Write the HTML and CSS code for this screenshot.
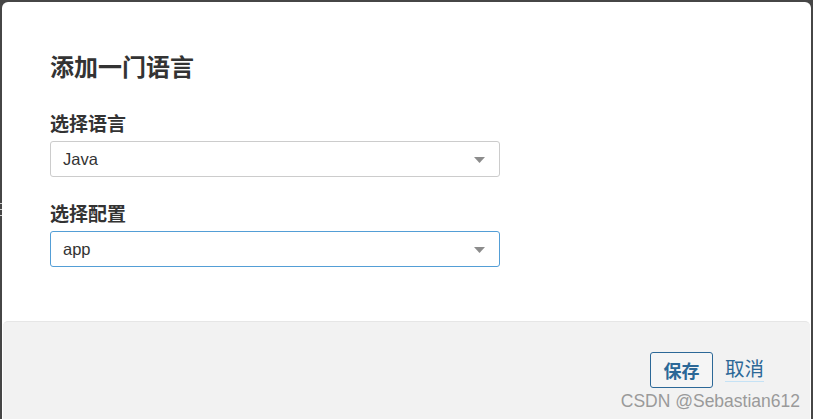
FILE: index.html
```html
<!DOCTYPE html>
<html lang="zh-CN">
<head>
<meta charset="utf-8">
<title>添加一门语言</title>
<link rel="stylesheet" href="styles.css">
</head>
<body>
<div class="bg-glyph"></div>
<div class="modal">
  <div class="modal-body">
    <h4 class="title">添加一门语言</h4>
    <div class="field">
      <div class="label">选择语言</div>
      <div class="select">
        <span class="value">Java</span>
        <svg class="caret" width="11" height="6" viewBox="0 0 11 6"><path d="M0 0H11L5.5 6Z" fill="#8c8c8c"/></svg>
      </div>
    </div>
    <div class="field">
      <div class="label">选择配置</div>
      <div class="select focused">
        <span class="value">app</span>
        <svg class="caret" width="11" height="6" viewBox="0 0 11 6"><path d="M0 0H11L5.5 6Z" fill="#8c8c8c"/></svg>
      </div>
    </div>
  </div>
  <div class="modal-footer">
    <button class="btn-save">保存</button>
    <a class="btn-cancel">取消</a>
  </div>
</div>
<div class="watermark">CSDN @Sebastian612</div>
</body>
</html>
```
FILE: styles.css
```css
html, body {
  margin: 0;
  padding: 0;
  height: 100%;
  overflow: hidden;
}
body {
  background: #464646;
  font-family: "Liberation Sans", "Noto Sans CJK SC", sans-serif;
  color: #333;
  position: relative;
  padding: 2px 2px 0 2px;
  box-sizing: border-box;
}
.bg-glyph {
  position: absolute;
  left: 0;
  top: 203px;
  width: 2px;
  height: 13px;
  background: linear-gradient(#cfcfcf 0 1px, transparent 1px 6px, #cfcfcf 6px 7px, transparent 7px 12px, #cfcfcf 12px 13px);
}
.modal {
  position: relative;
  background: #fff;
  border-radius: 6px 6px 0 0;
  height: 460px;
  display: flex;
  flex-direction: column;
}
.modal-body {
  padding: 47px 48px 0 48px;
  height: 319px;
  flex: none;
  box-sizing: border-box;
}
.title {
  margin: 0;
  font-family: "Noto Sans CJK SC", sans-serif;
  font-size: 24px;
  line-height: 34px;
  font-weight: 700;
  color: #333;
}
.field {
  margin-top: 27px;
}
.field + .field {
  margin-top: 23px;
}
.label {
  font-family: "Noto Sans CJK SC", sans-serif;
  font-size: 19px;
  line-height: 26px;
  font-weight: 700;
  color: #333;
  margin-bottom: 5px;
}
.select {
  width: 450px;
  height: 36px;
  box-sizing: border-box;
  border: 1px solid #cccccc;
  border-radius: 3px;
  display: flex;
  align-items: center;
  justify-content: space-between;
  padding: 0 14px 0 12px;
  background: #fff;
}
.select.focused {
  border-color: #539ed6;
}
.value {
  font-family: "Liberation Sans", sans-serif;
  font-size: 16.5px;
  color: #333;
}
.caret {
  display: block;
  margin-top: 1px;
}
.modal-footer {
  flex: 1;
  background: #f2f2f2;
  border-top: 1px solid #e6e6e6;
  border-radius: 5px 5px 0 0;
  margin: 0 1px;
  display: flex;
  justify-content: flex-end;
  align-items: flex-start;
  gap: 12px;
  padding: 30px 46px 0 0;
}
.btn-save {
  height: 36px;
  width: 63px;
  box-sizing: border-box;
  border: 1px solid #2c6897;
  border-radius: 3px;
  background: #f5f5f5;
  color: #2c6897;
  font-family: "Noto Sans CJK SC", sans-serif;
  font-size: 18px;
  font-weight: 700;
  padding: 0;
  line-height: 34px;
}
.btn-cancel {
  font-family: "Noto Sans CJK SC", sans-serif;
  font-size: 19.5px;
  color: #2c6897;
  line-height: 26px;
  margin-top: 3px;
  border-bottom: 1px solid #c5e2f5;
  height: 26px;
}
.watermark {
  position: absolute;
  right: 13px;
  bottom: 7px;
  font-family: "Liberation Sans", sans-serif;
  font-size: 17.5px;
  color: #9a9a9a;
}
```
